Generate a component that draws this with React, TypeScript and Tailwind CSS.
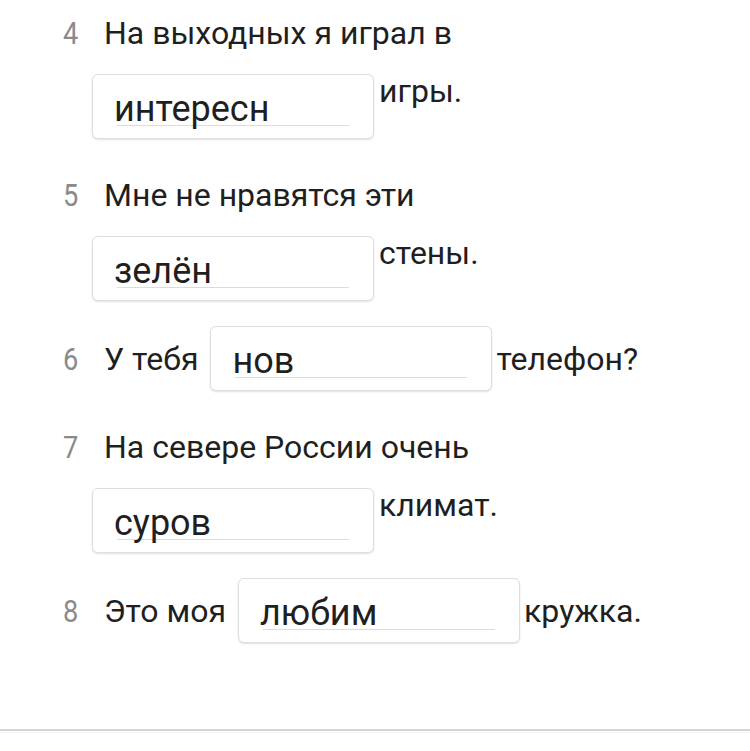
import React from 'react';

type Row = { n: number; kind: 'wrap' | 'inline'; before: string; value: string; after: string };

const rows: Row[] = [
  { n: 4, kind: 'wrap', before: 'На выходных я играл в', value: 'интересн', after: 'игры.' },
  { n: 5, kind: 'wrap', before: 'Мне не нравятся эти', value: 'зелён', after: 'стены.' },
  { n: 6, kind: 'inline', before: 'У тебя', value: 'нов', after: 'телефон?' },
  { n: 7, kind: 'wrap', before: 'На севере России очень', value: 'суров', after: 'климат.' },
  { n: 8, kind: 'inline', before: 'Это моя', value: 'любим', after: 'кружка.' },
];

const AnswerBox: React.FC<{ value: string }> = ({ value }) => (
  <div className="h-[65px] w-[282px] shrink-0 rounded-md border border-[#dedede] bg-white shadow-[0_1px_2px_rgba(0,0,0,0.12)]">
    <div className="mx-[24px] mt-[18px] border-b border-[#dcdcdc]">
      <span className="-ml-[3px] block text-[36px] leading-[32px] text-[#1f1f1f]">{value}</span>
    </div>
  </div>
);

const Num: React.FC<{ n: number }> = ({ n }) => (
  <span className="inline-block w-[41px] origin-left scale-x-[0.85] text-[32px] leading-10 text-[#8a8a8a]">{n}</span>
);

const App: React.FC = () => {
  return (
    <div className="flex h-[751px] w-[750px] flex-col bg-white font-['Roboto',sans-serif] text-[#1f1f1f]">
      <div className="flex flex-col gap-[25px] pl-[63px] pt-[2px]">
        {rows.map((r) =>
          r.kind === 'wrap' ? (
            <div key={r.n} className="flex">
              <div className="mt-[11px]">
                <Num n={r.n} />
              </div>
              <div className="flex flex-col">
                <div className="mt-[11px] text-[32px] leading-10">{r.before}</div>
                <div className="-ml-3 mt-[21px] flex items-start">
                  <AnswerBox value={r.value} />
                  <span className="-mt-[3px] ml-[5px] text-[32px] leading-10">{r.after}</span>
                </div>
              </div>
            </div>
          ) : (
            <div key={r.n} className="flex items-center">
              <Num n={r.n} />
              <span className="text-[32px] leading-10">{r.before}</span>
              <div className="ml-3">
                <AnswerBox value={r.value} />
              </div>
              <span className="ml-[4px] text-[32px] leading-10">{r.after}</span>
            </div>
          )
        )}
      </div>
      <div className="mt-auto mb-[18px]">
        <div className="h-[2px] bg-[#d5d5d5]" />
        <div className="mt-[1px] h-px bg-[#f3f3f3]" />
      </div>
    </div>
  );
};

export default App;
